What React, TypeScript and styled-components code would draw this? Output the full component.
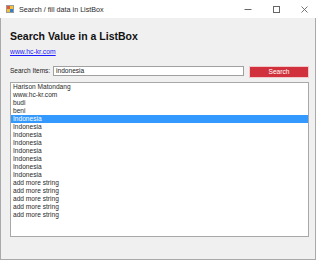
import React from 'react';
import styled, { createGlobalStyle } from 'styled-components';

const Global = createGlobalStyle`
  html, body { margin: 0; padding: 0; background: #ffffff; }
  body { font-family: "Liberation Sans", Arial, sans-serif; }
`;

const Window = styled.div`
  width: 316px;
  height: 260px;
  display: flex;
  flex-direction: column;
`;

const TitleBar = styled.div`
  height: 18px;
  flex-shrink: 0;
  background: #ffffff;
  display: flex;
  align-items: center;
`;

const AppIcon = styled.svg`
  margin-left: 6px;
  width: 8px;
  height: 8px;
  flex-shrink: 0;
`;

const Title = styled.span`
  margin-left: 5px;
  flex: 1;
  font-size: 7.2px;
  color: #2a2a2a;
  white-space: nowrap;
`;

const Controls = styled.div`
  display: flex;
  height: 18px;
`;

const CtrlButton = styled.div`
  width: 28px;
  height: 18px;
  box-sizing: border-box;
  padding-left: 4px;
  display: flex;
  align-items: center;
  justify-content: center;
`;

const Client = styled.div`
  flex: 1;
  background: #f0f0f0;
  border: 1px solid #a9a9a9;
  border-top: none;
  padding: 12px 0 0 9px;
  display: flex;
  flex-direction: column;
  align-items: flex-start;
`;

const Heading = styled.h1`
  margin: 0;
  font-size: 10.5px;
  line-height: 12px;
  font-weight: bold;
  color: #111;
`;

const Link = styled.a`
  margin-top: 6px;
  font-size: 6.8px;
  line-height: 8px;
  color: #1a1aff;
  text-decoration: underline;
`;

const SearchRow = styled.div`
  margin-top: 10px;
  width: 299px;
  height: 12px;
  display: flex;
  align-items: flex-start;
`;

const Label = styled.span`
  width: 43px;
  font-size: 6.5px;
  line-height: 10px;
  color: #222;
  white-space: nowrap;
`;

const TextBox = styled.div`
  width: 191px;
  height: 10px;
  box-sizing: border-box;
  border: 1px solid #a0a0a0;
  background: #fff;
  padding-left: 2px;
  font-size: 6.6px;
  line-height: 8px;
  color: #222;
`;

const SearchButton = styled.div`
  margin-left: 5px;
  width: 60px;
  height: 12px;
  box-sizing: border-box;
  border: 1px solid #f2c9cb;
  background: #d1313c;
  color: #fff;
  font-size: 6.6px;
  line-height: 10px;
  text-align: center;
`;

const ListBox = styled.div`
  margin-top: 4px;
  width: 299px;
  height: 155px;
  box-sizing: border-box;
  border: 1px solid #a8a8a8;
  background: #fff;
  display: flex;
  flex-direction: column;
`;

const Item = styled.div<{ $selected?: boolean }>`
  height: 8px;
  line-height: 8px;
  padding: 0 0 0 2px;
  font-size: 6.6px;
  white-space: nowrap;
  background: ${(p) => (p.$selected ? '#3399ff' : 'transparent')};
  color: ${(p) => (p.$selected ? '#ffffff' : '#2a2a2a')};
`;

const items: string[] = [
  'Harison Matondang',
  'www.hc-kr.com',
  'budi',
  'beni',
  'Indonesia',
  'Indonesia',
  'Indonesia',
  'Indonesia',
  'Indonesia',
  'Indonesia',
  'Indonesia',
  'Indonesia',
  'add more string',
  'add more string',
  'add more string',
  'add more string',
  'add more string',
];

export default function App() {
  return (
    <>
      <Global />
      <Window>
        <TitleBar>
          <AppIcon viewBox="0 0 8 8">
            <rect x="0.5" y="0.5" width="7" height="7" fill="#e8e8e8" stroke="#9a9a9a" strokeWidth="1" />
            <rect x="1" y="1" width="3" height="3" fill="#e2583e" />
            <rect x="4" y="1" width="3" height="3" fill="#f2c230" />
            <rect x="1" y="4" width="3" height="3" fill="#f2c230" />
            <rect x="4" y="4" width="3" height="3" fill="#2f7fd6" />
          </AppIcon>
          <Title>Search / fill data in ListBox</Title>
          <Controls>
            <CtrlButton>
              <svg width="8" height="8" viewBox="0 0 8 8">
                <line x1="0.5" y1="4.5" x2="7.5" y2="4.5" stroke="#666" strokeWidth="1" />
              </svg>
            </CtrlButton>
            <CtrlButton>
              <svg width="7" height="7" viewBox="0 0 7 7">
                <rect x="0.5" y="0.5" width="6" height="6" fill="none" stroke="#666" strokeWidth="1" />
              </svg>
            </CtrlButton>
            <CtrlButton>
              <svg width="7" height="7" viewBox="0 0 7 7">
                <path d="M0.5 0.5 L6.5 6.5 M6.5 0.5 L0.5 6.5" stroke="#666" strokeWidth="0.9" />
              </svg>
            </CtrlButton>
          </Controls>
        </TitleBar>
        <Client>
          <Heading>Search Value in a ListBox</Heading>
          <Link href="#">www.hc-kr.com</Link>
          <SearchRow>
            <Label>Search Items:</Label>
            <TextBox>indonesia</TextBox>
            <SearchButton>Search</SearchButton>
          </SearchRow>
          <ListBox>
            {items.map((t, i) => (
              <Item key={i} $selected={i === 4}>
                {t}
              </Item>
            ))}
          </ListBox>
        </Client>
      </Window>
    </>
  );
}
